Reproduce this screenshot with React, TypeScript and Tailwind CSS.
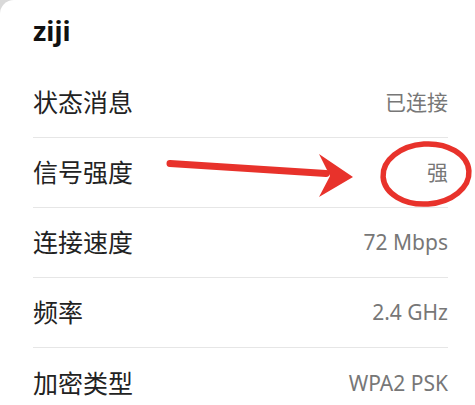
const rows = [
  { label: '状态消息', value: '已连接' },
  { label: '信号强度', value: '强' },
  { label: '连接速度', value: '72 Mbps' },
  { label: '频率', value: '2.4 GHz' },
  { label: '加密类型', value: 'WPA2 PSK' },
];

const font = { fontFamily: '"Noto Sans", "Noto Sans CJK SC", sans-serif' };

export default function App() {
  return (
    <div className="relative w-[475px] h-[405px] overflow-hidden bg-[#d9d9d9]" style={font}>
      <div className="w-full h-full bg-white rounded-tl-[14px]">
        {/* Title */}
        <div className="h-[68px] pl-[33px] pr-[27px] flex items-center">
          <span className="text-[27px] font-bold text-[#111] leading-none pb-[8px]">ziji</span>
        </div>
        {/* Rows */}
        <div className="pl-[33px] pr-[27px]">
          {rows.map((r, i) => (
            <div
              key={r.label}
              className={`h-[70px] flex items-center justify-between ${i < rows.length - 1 ? 'border-b border-[#e6e6e6]' : ''}`}
            >
              <span className="text-[25px] text-[#222] leading-none">{r.label}</span>
              <span className="text-[21px] text-[#777] leading-none">{r.value}</span>
            </div>
          ))}
        </div>
      </div>

      {/* Red annotation drawing */}
      <svg className="absolute inset-0 pointer-events-none" width="475" height="405" viewBox="0 0 475 405">
        <path d="M170 163.5 L326 173.5" stroke="#e8322b" strokeWidth="7" strokeLinecap="round" />
        <path d="M319 154 L353 177 L319 197 L330 176 Z" fill="#e8322b" />
        <ellipse cx="426" cy="174" rx="43" ry="30" fill="none" stroke="#e8322b" strokeWidth="5.5" transform="rotate(-4 426 174)" />
      </svg>
    </div>
  );
}
